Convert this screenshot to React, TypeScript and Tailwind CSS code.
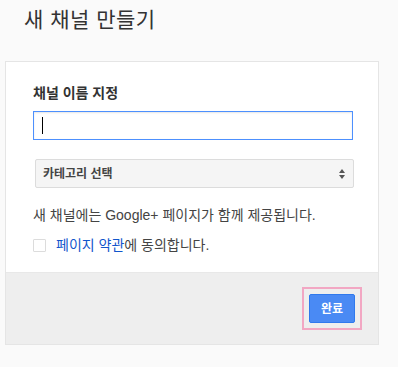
export default function App() {
  return (
    <div
      className="h-[367px] w-[398px] overflow-hidden bg-[#fafafa] text-[#333]"
      style={{ fontFamily: '"Liberation Sans", "Noto Sans CJK KR", sans-serif' }}
    >
      {/* TITLE */}
      <h1 className="pl-[24px] pt-[5px] text-[21px] leading-[30px] font-normal tracking-[0.5px] text-[#333]">새 채널 만들기</h1>

      {/* CARD */}
      <div className="ml-[5px] mt-[26px] w-[374px] border border-[#e5e5e5] bg-white">
        <div className="px-[27px] pt-[21px] pb-[17px]">
          <div className="text-[14px] leading-[20px] font-bold text-[#333]">채널 이름 지정</div>

          <div className="mt-[8px] flex h-[29px] w-[320px] items-center border border-[#4d90fe] bg-white pl-[8px] shadow-[inset_0_1px_2px_rgba(0,0,0,0.1)]">
            <span className="h-[17px] w-px bg-black" />
          </div>

          <div className="mt-[19px] ml-[2px] flex h-[29px] w-[319px] items-center justify-between rounded-[2px] border border-[#dcdcdc] bg-[#f5f5f5] pl-[7px] pr-[7px]">
            <span className="text-[12px] font-bold text-[#444]">카테고리 선택</span>
            <svg width="8" height="12" viewBox="0 0 8 12">
              <path d="M4 1 L7 5 H1 Z" fill="#555" />
              <path d="M4 11 L7 7 H1 Z" fill="#555" />
            </svg>
          </div>

          <p className="mt-[17px] text-[14px] leading-[20px] text-[#444]">
            새 채널에는 Google+ 페이지가 함께 제공됩니다.
          </p>

          <label className="mt-[10px] flex items-center gap-[10px] text-[14px] leading-[20px] text-[#444]">
            <span className="h-[13px] w-[13px] rounded-[1px] border border-[#dcdcdc] bg-white" />
            <span>
              <span className="text-[#15c]">페이지 약관</span>에 동의합니다.
            </span>
          </label>
        </div>

        {/* FOOTER */}
        <div className="flex h-[72px] items-center justify-end border-t border-[#e8e8e8] bg-[#eeeeee] pr-[16px]">
          <div className="border-2 border-[#f2a7c3] p-[5px]">
            <button className="flex h-[29px] w-[46px] items-center justify-center rounded-[2px] border border-[#3079ed] bg-[#4a8af4] text-[12px] font-bold text-white">
              완료
            </button>
          </div>
        </div>
      </div>
    </div>
  )
}
